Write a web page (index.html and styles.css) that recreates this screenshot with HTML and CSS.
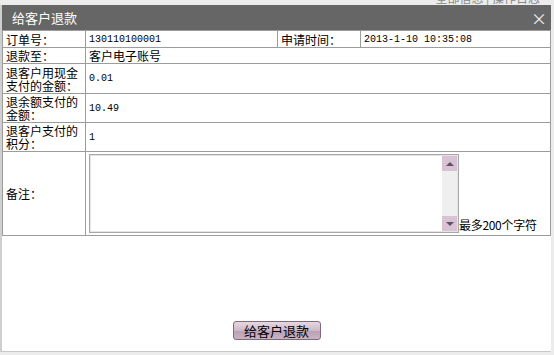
FILE: index.html
```html
<!DOCTYPE html>
<html lang="zh-CN">
<head>
  <meta charset="UTF-8">
  <title>给客户退款</title>
  <link rel="stylesheet" href="styles.css">
</head>
<body>
  <div class="topbar">
    <div class="toplinks">全部信息 | 操作日志</div>
  </div>
  <div class="dialog">
    <div class="dialog-title">
      <span>给客户退款</span>
      <span class="close">×</span>
    </div>
    <table class="refund">
      <tr class="r1">
        <td class="label c1">订单号：</td>
        <td class="val c2">130110100001</td>
        <td class="label c3">申请时间：</td>
        <td class="val c4">2013-1-10 10:35:08</td>
      </tr>
      <tr class="r2">
        <td class="label">退款至：</td>
        <td colspan="3" class="val">客户电子账号</td>
      </tr>
      <tr class="r3">
        <td class="label">退客户用现金支付的金额：</td>
        <td colspan="3" class="val">0.01</td>
      </tr>
      <tr class="r4">
        <td class="label">退余额支付的金额：</td>
        <td colspan="3" class="val">10.49</td>
      </tr>
      <tr class="r5">
        <td class="label">退客户支付的积分：</td>
        <td colspan="3" class="val">1</td>
      </tr>
      <tr class="r6">
        <td class="label">备注：</td>
        <td colspan="3" class="memo-cell">
          <div class="memo-row">
            <div class="memo-box">
              <textarea class="memo" name="memo"></textarea>
              <div class="fake-scroll">
                <div class="sb-btn"><span class="arrow-up"></span></div>
                <div class="sb-track"></div>
                <div class="sb-btn"><span class="arrow-down"></span></div>
              </div>
            </div>
            <span class="hint">最多200个字符</span>
          </div>
        </td>
      </tr>
    </table>
    <div class="actions">
      <button type="button" class="btn">给客户退款</button>
    </div>
  </div>
</body>
</html>
```

FILE: styles.css
```css
body {
  margin: 0;
  background-color: #ececec;
  font-family: "Noto Sans CJK SC", "Liberation Sans", sans-serif;
  font-size: 12px;
  color: #000;
}
.topbar {
  height: 5px;
  overflow: hidden;
  padding-right: 14px;
}
.toplinks {
  margin-top: -9px;
  line-height: 13px;
  text-align: right;
  color: #888;
  font-size: 12px;
}
.dialog {
  margin-right: 3px;
  border-left: 2px solid #cfcfcf;
  border-bottom: 1px solid #c8c8c8;
  background-color: #fff;
  height: 346px;
}
.dialog-title {
  height: 25px;
  background-color: #666;
  color: #fff;
  font-size: 13px;
  display: flex;
  align-items: center;
  justify-content: space-between;
  padding: 0 4px 0 10px;
}
.close {
  font-size: 16px;
  color: #eee;
  line-height: 1;
}
.refund {
  border-collapse: collapse;
  width: 549px;
  margin-left: 0;
}
.refund td {
  border: 1px solid #9c9c9c;
  padding: 0 3px;
  line-height: 13px;
  vertical-align: middle;
}
.c1 { width: 76px; }
.c2 { width: 185px; }
.c3 { width: 76px; }
.r1 td { height: 16px; }
.r2 td { height: 15px; }
.r3 td { height: 29px; }
.r4 td { height: 28px; }
.r5 td { height: 28px; }
.r6 td { height: 83px; }
.val {
  font-family: "Liberation Mono", "Noto Sans CJK SC", monospace;
  font-size: 10px;
}
.r2 .val {
  font-family: "Noto Sans CJK SC", sans-serif;
  font-size: 12px;
}
.memo-cell {
  padding: 0 0 0 2px;
}
.memo-row {
  display: flex;
  align-items: flex-end;
}
.memo-box {
  display: flex;
  width: 366px;
  height: 75px;
  border: 1px solid #a8a8a8;
  box-shadow: inset 0 0 0 1px #e4e4e4;
  padding: 1px;
}
.memo {
  flex: 1;
  border: none;
  resize: none;
  outline: none;
  padding: 2px;
  font-size: 12px;
  overflow: hidden;
}
.fake-scroll {
  width: 15px;
  display: flex;
  flex-direction: column;
}
.sb-btn {
  height: 15px;
  background-color: #d9c2d3;
  display: flex;
  align-items: center;
  justify-content: center;
}
.sb-track {
  flex: 1;
  background-color: #efefef;
}
.arrow-up {
  width: 0;
  height: 0;
  border-left: 4px solid transparent;
  border-right: 4px solid transparent;
  border-bottom: 4px solid #5a5560;
}
.arrow-down {
  width: 0;
  height: 0;
  border-left: 4px solid transparent;
  border-right: 4px solid transparent;
  border-top: 4px solid #5a5560;
}
.hint {
  font-size: 12px;
  line-height: 14px;
  margin-bottom: 1px;
  letter-spacing: -0.3px;
}
.actions {
  text-align: center;
  margin-top: 85px;
}
.btn {
  width: 88px;
  height: 19px;
  padding: 0;
  border: 1px solid #7f6a7c;
  border-radius: 3px;
  background: linear-gradient(#e6d9e3, #cdb8c8 50%, #b9a0b3 51%, #c9b3c4);
  font-family: "Noto Sans CJK SC", sans-serif;
  font-size: 13px;
  line-height: 16px;
  color: #000;
}
```
